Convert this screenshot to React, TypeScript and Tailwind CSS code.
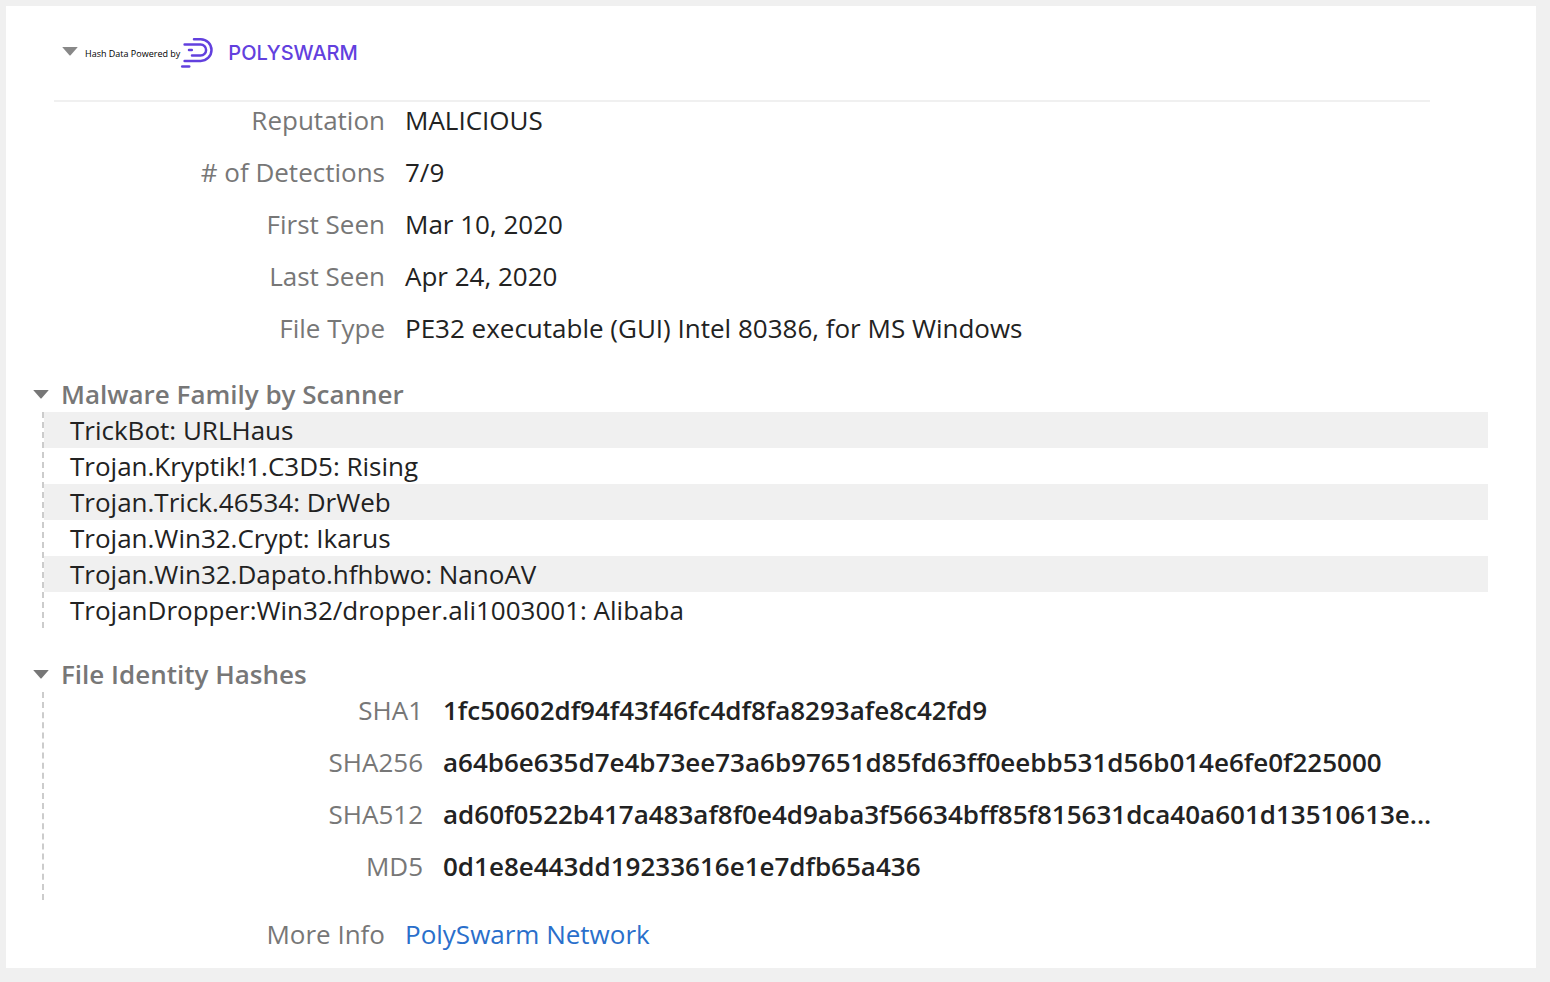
import { useState, ReactNode } from 'react';

interface Field {
  label: string;
  value: string;
}

const SUMMARY: Field[] = [
  { label: 'Reputation', value: 'MALICIOUS' },
  { label: '# of Detections', value: '7/9' },
  { label: 'First Seen', value: 'Mar 10, 2020' },
  { label: 'Last Seen', value: 'Apr 24, 2020' },
  { label: 'File Type', value: 'PE32 executable (GUI) Intel 80386, for MS Windows' },
];

const SCANNERS = [
  'TrickBot: URLHaus',
  'Trojan.Kryptik!1.C3D5: Rising',
  'Trojan.Trick.46534: DrWeb',
  'Trojan.Win32.Crypt: Ikarus',
  'Trojan.Win32.Dapato.hfhbwo: NanoAV',
  'TrojanDropper:Win32/dropper.ali1003001: Alibaba',
];

const HASHES: Field[] = [
  { label: 'SHA1', value: '1fc50602df94f43f46fc4df8fa8293afe8c42fd9' },
  { label: 'SHA256', value: 'a64b6e635d7e4b73ee73a6b97651d85fd63ff0eebb531d56b014e6fe0f225000' },
  { label: 'SHA512', value: 'ad60f0522b417a483af8f0e4d9aba3f56634bff85f815631dca40a601d13510613e...' },
  { label: 'MD5', value: '0d1e8e443dd19233616e1e7dfb65a436' },
];

function Caret({ open, className }: { open: boolean; className: string }) {
  return (
    <svg
      width="16"
      height="10"
      viewBox="0 0 16 10"
      aria-hidden="true"
      className={`shrink-0 ${className} ${open ? '' : '-rotate-90'}`}
    >
      <path d="M0.8 1h14.4q0.6 0 0.2 0.6L8.6 9.2q-0.6 0.6-1.2 0L0.6 1.6Q0.2 1 0.8 1z" fill="currentColor" />
    </svg>
  );
}

function PolySwarmMark() {
  return (
    <svg
      width="34"
      height="32"
      viewBox="0 0 34 32"
      fill="none"
      stroke="currentColor"
      strokeWidth="2.5"
      strokeLinecap="round"
      aria-hidden="true"
      className="shrink-0"
    >
      <path d="M14 2.3h6.7a10.8 10.8 0 0 1 0 21.6H4.6" />
      <path d="M4.6 7.6h16a5.5 5.5 0 0 1 0 11H12" />
      <path d="M9 13.1h2.8" />
      <path d="M2.2 29.6h7" />
    </svg>
  );
}

function Section({ title, children }: { title: string; children: ReactNode }) {
  const [open, setOpen] = useState(true);

  return (
    <section>
      <h2>
        <button
          type="button"
          aria-expanded={open}
          onClick={() => setOpen(!open)}
          className="flex cursor-pointer items-center gap-3 pl-[27px] font-semibold text-[#777]"
        >
          <Caret open={open} className="text-[#777]" />
          {title}
        </button>
      </h2>
      {open && <div className="ml-9 border-l-2 border-dashed border-[#ccc]">{children}</div>}
    </section>
  );
}

export default function App() {
  const [open, setOpen] = useState(true);

  return (
    <div className="min-h-screen bg-[#f0f0f0] py-1.5 pr-3.5 pl-1.5 font-['Open_Sans','Noto_Sans',sans-serif] text-[26px] leading-9 text-[#222]">
      <main className="bg-white pb-4">
        <header className="mr-[106px] ml-12 h-24 border-b-2 border-[#f0f0f0] pt-[30px] pl-2">
          <button
            type="button"
            aria-expanded={open}
            onClick={() => setOpen(!open)}
            className="flex cursor-pointer items-center text-[#6240de]"
          >
            <Caret open={open} className="mb-1 text-[#888]" />
            <span className="pt-0.5 pl-[7px] text-[9px] leading-8 text-black">Hash Data Powered by</span>
            <PolySwarmMark />
            <span className="pl-3.5 font-['Inter',sans-serif] text-[20px] leading-8 font-medium">POLYSWARM</span>
          </button>
        </header>

        {open && (
          <>
            <dl className="space-y-4 pb-[30px]">
              {SUMMARY.map(({ label, value }) => (
                <div key={label} className="flex gap-5 pr-12">
                  <dt className="w-[379px] shrink-0 text-right text-[#777]">{label}</dt>
                  <dd>{value}</dd>
                </div>
              ))}
            </dl>

            <Section title="Malware Family by Scanner">
              <ul className="mr-12">
                {SCANNERS.map((name) => (
                  <li key={name} className="pl-[26px] odd:bg-[#f0f0f0]">
                    {name}
                  </li>
                ))}
              </ul>
            </Section>

            <div className="pt-7">
              <Section title="File Identity Hashes">
                <dl>
                  {HASHES.map(({ label, value }) => (
                    <div key={label} className="flex gap-5 pr-24 pb-4">
                      <dt className="w-[379px] shrink-0 text-right text-[#777]">{label}</dt>
                      <dd className="truncate font-semibold">{value}</dd>
                    </div>
                  ))}
                </dl>
              </Section>
            </div>

            <dl className="flex gap-5 pt-4">
              <dt className="w-[379px] shrink-0 text-right text-[#777]">More Info</dt>
              <dd>
                <a href="#polyswarm" className="text-[#2a6fcb]">
                  PolySwarm Network
                </a>
              </dd>
            </dl>
          </>
        )}
      </main>
    </div>
  );
}
